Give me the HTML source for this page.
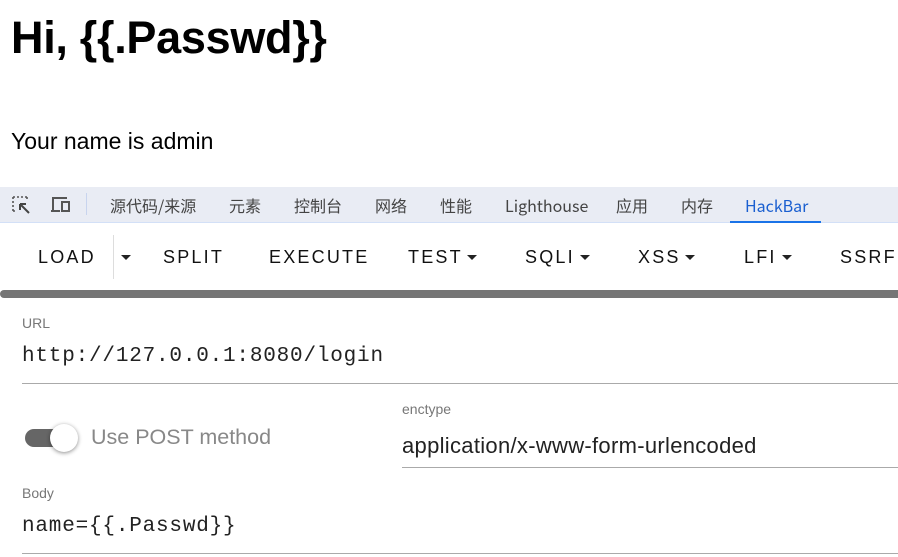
<!DOCTYPE html>
<html><head><meta charset="utf-8"><style>
*{margin:0;padding:0;box-sizing:border-box}
body{width:898px;height:557px;overflow:hidden;background:#fff;font-family:"Liberation Sans","Noto Sans CJK SC",sans-serif;position:relative;color:#000}
.a{position:absolute;white-space:nowrap}
h1{position:absolute;left:11px;top:12px;font-size:45px;font-weight:bold;letter-spacing:-0.3px}
.tabs{position:absolute;left:0;top:187px;width:898px;height:36px;background:#e9ecf4;border-bottom:1px solid #d3e0f7}
.tab{position:absolute;top:8px;height:20px;line-height:20px;font-size:16px;color:#444;font-family:"Noto Sans CJK SC",sans-serif}
.tb{position:absolute;top:247px;font-size:18px;letter-spacing:2.2px;color:#111;font-weight:500}
.caret{position:absolute;top:255px;width:0;height:0;border-left:5px solid transparent;border-right:5px solid transparent;border-top:5px solid #222}
.lbl{position:absolute;font-size:14px;color:#777}
.inp{position:absolute;font-size:22px;color:#222}
.mono{font-family:"Liberation Mono",monospace;letter-spacing:0.8px;font-size:21px}
.line{position:absolute;height:1px;background:#aaa}
</style></head><body>
<h1>Hi, {{.Passwd}}</h1>
<div class="a" style="left:11px;top:128px;font-size:23px">Your name is admin</div>
<div class="tabs">
<svg class="a" style="left:12px;top:9px" width="22" height="20" viewBox="0 0 22 20"><path d="M1 1h14M1 1v14M1 15h4M15 1v4" stroke="#555" stroke-width="1.6" stroke-dasharray="2 2" fill="none"/><path d="M8 8l9 9M8 8h6M8 8v6" stroke="#444" stroke-width="2" fill="none"/></svg>
<svg class="a" style="left:50px;top:9px" width="22" height="18" viewBox="0 0 22 18"><path d="M3 14V2h14M1 15h9" stroke="#555" stroke-width="2" fill="none"/><rect x="12" y="6" width="7" height="9" stroke="#555" stroke-width="2" fill="none"/></svg>
<div class="a" style="left:86px;top:6px;width:1px;height:22px;background:#c8d4ee"></div>
<span class="tab" style="left:110px">源代码/来源</span>
<span class="tab" style="left:229px">元素</span>
<span class="tab" style="left:294px">控制台</span>
<span class="tab" style="left:375px">网络</span>
<span class="tab" style="left:440px">性能</span>
<span class="tab" style="left:505px">Lighthouse</span>
<span class="tab" style="left:616px">应用</span>
<span class="tab" style="left:681px">内存</span>
<span class="tab" style="left:745px;color:#1a5fd0">HackBar</span>
<div class="a" style="left:730px;top:34px;width:91px;height:2px;background:#1a73e8"></div>
</div>
<span class="tb" style="left:38px">LOAD</span>
<div class="a" style="left:113px;top:235px;width:1px;height:44px;background:#ddd"></div>
<div class="caret" style="left:121px"></div>
<span class="tb" style="left:163px">SPLIT</span>
<span class="tb" style="left:269px">EXECUTE</span>
<span class="tb" style="left:408px">TEST</span><div class="caret" style="left:467px"></div>
<span class="tb" style="left:525px">SQLI</span><div class="caret" style="left:580px"></div>
<span class="tb" style="left:638px">XSS</span><div class="caret" style="left:685px"></div>
<span class="tb" style="left:744px">LFI</span><div class="caret" style="left:782px"></div>
<span class="tb" style="left:840px">SSRF</span>
<div class="a" style="left:0;top:290px;width:900px;height:8px;background:#757575;border-radius:4px 0 0 4px"></div>
<span class="lbl" style="left:22px;top:315px">URL</span>
<span class="inp mono" style="left:22px;top:345px">http://127.0.0.1:8080/login</span>
<div class="line" style="left:22px;top:383px;width:876px"></div>
<div class="a" style="left:25px;top:429px;width:46px;height:18px;border-radius:9px;background:#666"></div>
<div class="a" style="left:50px;top:424px;width:28px;height:28px;border-radius:50%;background:#fff;box-shadow:0 1px 4px rgba(0,0,0,.45)"></div>
<span class="a" style="left:91px;top:425px;font-size:21.5px;color:#888">Use POST method</span>
<span class="lbl" style="left:402px;top:401px">enctype</span>
<span class="inp" style="left:402px;top:433px;letter-spacing:0.3px">application/x-www-form-urlencoded</span>
<div class="line" style="left:402px;top:467px;width:496px"></div>
<span class="lbl" style="left:22px;top:485px">Body</span>
<span class="inp mono" style="left:22px;top:515px">name={{.Passwd}}</span>
<div class="line" style="left:22px;top:553px;width:876px"></div>
</body></html>
